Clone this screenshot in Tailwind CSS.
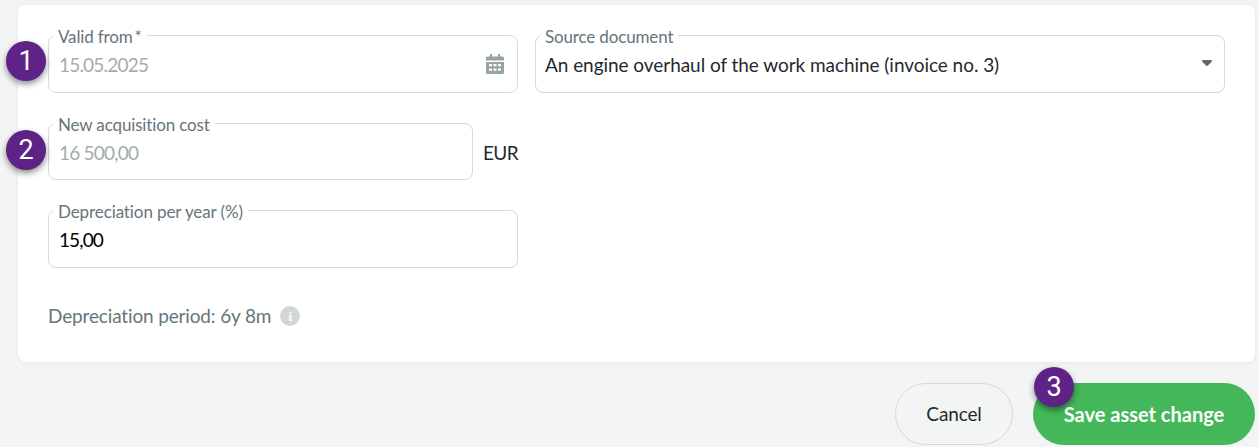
<!DOCTYPE html>
<html lang="en">
<head>
    <meta charset="UTF-8">
    <meta name="viewport" content="width=device-width, initial-scale=1.0">
    <title>Asset change</title>
    <script src="https://cdn.jsdelivr.net/npm/@tailwindcss/browser@4"></script>
</head>
<body class="bg-[#f3f5f5] font-[family-name:'Lato','Noto_Sans',sans-serif] overflow-hidden">
    <div class="relative w-[1259px] h-[447px] pt-[5px] pl-[18px] pr-[4px]">
        <!-- form card -->
        <div class="bg-white h-[357px] rounded-[8px] shadow-[0_1px_4px_rgba(0,0,0,0.06)] pl-[30px] pr-[30px] pt-[18px]">
            <div class="flex gap-[17px]">
                <fieldset class="w-[470px] h-[70px] border border-[#d3dadb] rounded-[8px] pl-[4px] pr-[13px] flex items-center justify-between">
                    <legend class="px-[5px] pt-[4px] text-[17px] leading-[20px] tracking-[-0.15px] text-[#66757a]">Valid from<span class="ml-[2px]">*</span></legend>
                    <span class="pl-[6px] -mt-[9px] text-[19px] tracking-[-0.8px] text-[#a3acae]">15.05.2025</span>
                    <svg class="w-[18px] h-[20px] -mt-[11px]" viewBox="0 0 18 20" fill="#98a3a5">
                        <path d="M4 0h2v3H4zM12 0h2v3h-2z"/>
                        <path fill-rule="evenodd" d="M1.500 2.500H16.500A1.500 1.500 0 0 1 18 4V6.500H0V4A1.500 1.500 0 0 1 1.500 2.500zM0 8H18V18.500A1.500 1.500 0 0 1 16.500 20H1.500A1.500 1.500 0 0 1 0 18.500zM3 10v2.200h3V10zM7.500 10v2.200h3V10zM12 10v2.200h3V10zM3 14.500v2.200h3v-2.200zM7.500 14.500v2.200h3v-2.200zM12 14.500v2.200h3v-2.200z"/>
                    </svg>
                </fieldset>
                <fieldset class="w-[690px] h-[70px] border border-[#d3dadb] rounded-[8px] pl-[4px] pr-[12px] flex items-center justify-between">
                    <legend class="px-[5px] pt-[4px] text-[17px] leading-[20px] tracking-[-0.15px] text-[#66757a]">Source document</legend>
                    <span class="pl-[5px] -mt-[9px] text-[19px] tracking-[-0.05px] text-[#1f2a30]">An engine overhaul of the work machine (invoice no. 3)</span>
                    <svg class="w-[10px] h-[6px] -mt-[13px]" viewBox="0 0 10 6" fill="#5f6b70"><path d="M1 0h8a1 1 0 0 1 .7 1.700L5.700 5.700a1 1 0 0 1-1.400 0L.3 1.700A1 1 0 0 1 1 0z"/></svg>
                </fieldset>
            </div>

            <div class="flex items-center mt-[18px] w-[470px] justify-between">
                <fieldset class="w-[425px] h-[69px] border border-[#d3dadb] rounded-[8px] pl-[4px] flex items-center">
                    <legend class="px-[5px] pt-[4px] text-[17px] leading-[20px] tracking-[-0.15px] text-[#66757a]">New acquisition cost</legend>
                    <span class="pl-[6px] -mt-[8px] text-[19px] tracking-[-0.8px] text-[#a3acae]">16 500,00</span>
                </fieldset>
                <span class="text-[19px] tracking-[-0.6px] text-[#1f2a30] mt-[15px] -ml-[1px]">EUR</span>
            </div>

            <fieldset class="w-[470px] h-[70px] mt-[18px] border border-[#d3dadb] rounded-[8px] pl-[4px] flex items-center">
                <legend class="px-[5px] pt-[4px] text-[17px] leading-[20px] tracking-[-0.1px] text-[#66757a]">Depreciation per year (%)</legend>
                <span class="pl-[6px] -mt-[9px] text-[19px] tracking-[-0.9px] text-black">15,00</span>
            </fieldset>

            <div class="flex items-center gap-[9px] mt-[34px] text-[19px] tracking-[-0.15px] text-[#66757a]">
                <span>Depreciation period: 6y 8m</span>
                <span class="w-[20px] h-[20px] rounded-full bg-[#d1d7d9] flex items-center justify-center text-white text-[13px] font-bold [font-family:Times,serif]">i</span>
            </div>
        </div>

        <!-- actions -->
        <div class="flex justify-end gap-[20px] mt-[21px]">
            <button class="w-[118px] h-[62px] rounded-full border border-[#d3dadb] text-[19px] tracking-[-0.15px] text-[#1f2a30]">Cancel</button>
            <button class="w-[222px] h-[62px] rounded-full bg-[#43b75a] text-[20px] font-bold text-white">Save asset change</button>
        </div>

        <!-- step badges -->
        <div class="absolute left-[6px] top-[41px] w-[40px] h-[40px] rounded-full bg-[#5f2388] shadow-[0_3px_6px_rgba(0,0,0,0.45)] flex items-center justify-center text-white text-[27px] [font-family:Roboto,sans-serif]">1</div>
        <div class="absolute left-[6px] top-[130px] w-[40px] h-[40px] rounded-full bg-[#5f2388] shadow-[0_3px_6px_rgba(0,0,0,0.45)] flex items-center justify-center text-white text-[27px] [font-family:Roboto,sans-serif]">2</div>
        <div class="absolute left-[1034px] top-[367px] w-[40px] h-[40px] rounded-full bg-[#5f2388] shadow-[0_3px_6px_rgba(0,0,0,0.45)] flex items-center justify-center text-white text-[27px] [font-family:Roboto,sans-serif]">3</div>
    </div>
</body>
</html>
